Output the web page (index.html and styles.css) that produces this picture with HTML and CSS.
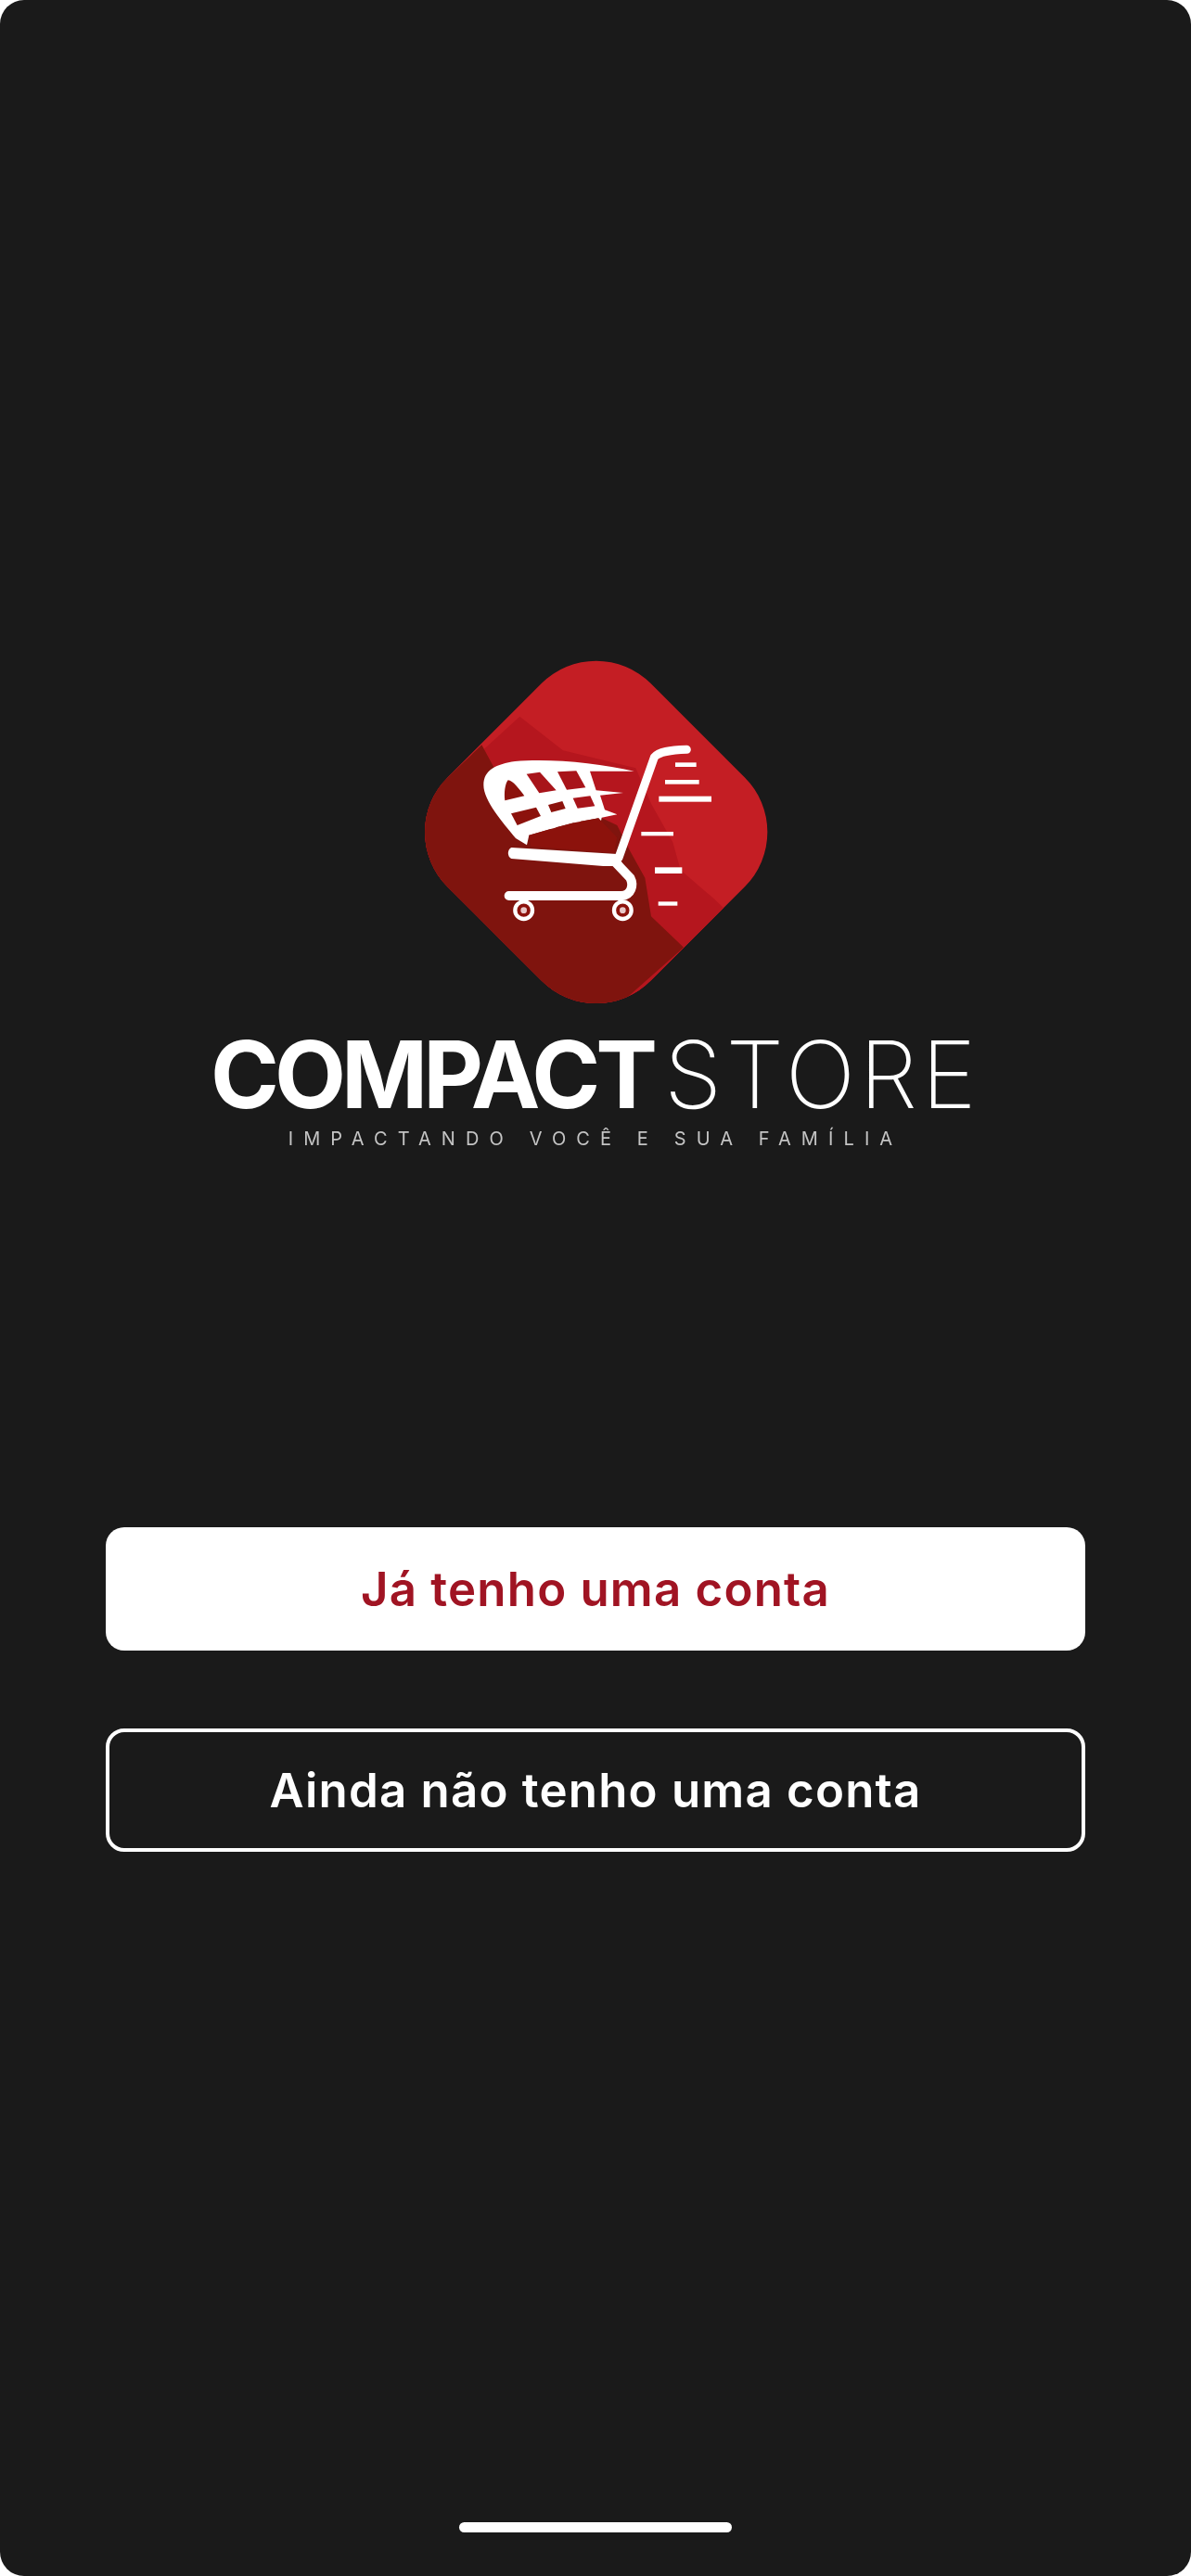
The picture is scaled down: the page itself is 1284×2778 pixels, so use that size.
FILE: index.html
```html
<!DOCTYPE html>
<html lang="pt-BR">

<head>
	<meta charset="UTF-8" />
	<title>Compact Store</title>
	<link rel="stylesheet" href="styles.css">
</head>

<body>
	<div class="screen">
		<div class="brand">
			<svg class="logo" viewBox="0 0 1260 1230" xmlns="http://www.w3.org/2000/svg">
				<defs>
					<clipPath id="diamond">
						<rect x="167" y="157" width="930" height="930" rx="250" transform="rotate(45 632 622)" />
					</clipPath>
				</defs>
				<g clip-path="url(#diamond)">
					<rect x="0" y="0" width="1260" height="1230" fill="#c41e24" />
					<!-- long shadow, lighter band then darker core -->
					<path d="M0,600 L385,248 L525,358 L760,415 L810,530 L880,655 L905,745 L1010,835 L1100,920 L1000,1100 L600,1230 L0,1230 Z" fill="#b5161e" />
					<path d="M0,590 L262,340 L300,410 L700,600 L740,680 L790,770 L810,895 L915,995 L650,1230 L0,1230 Z" fill="#7f140e" />
				</g>
				<!-- cart -->
				<path d="M268,470 C268,420 310,402 370,393 C480,383 640,398 755,425 L612,425 L632,487 L720,495 L645,503 L660,550 L700,565 L650,575 L645,600 L640,577 L582,587 L572,630 L560,592 L502,607 L517,662 L485,612 L415,632 L408,664 L372,642 C330,590 268,520 268,470 Z" fill="#fff" />
				<path d="M347,454 C362,454 385,485 400,505 L337,520 C334,495 337,467 347,454 Z" fill="#8c120c" />
				<path d="M407,434 L450,428 L503,487 L448,496 Z" fill="#a8141a" />
				<path d="M507,427 L568,424 L598,478 L537,485 Z" fill="#a8141a" />
				<path d="M477,534 L523,522 L533,546 L487,558 Z" fill="#8c120c" />
				<path d="M557,512 L613,505 L628,538 L572,545 Z" fill="#a8141a" />
				<path d="M357,562 L438,542 L453,570 L377,600 Z" fill="#8c120c" />
				<path d="M415,632 L485,612 L560,592 L640,577 L700,640 L690,690 L420,668 Z" fill="#8c120c" />
				<path d="M925,355 C870,357 835,362 820,380 L705,705" fill="none" stroke="#fff" stroke-width="27" stroke-linecap="round" />
				<path d="M358,672 L700,693 L722,732 L655,732 L358,708 C344,702 344,678 358,672 Z" fill="#fff" />
				<path d="M690,715 L742,770 C755,795 745,825 715,828 L350,828" fill="none" stroke="#fff" stroke-width="30" stroke-linecap="round" />
				<circle cx="398" cy="875" r="28" fill="#8c120c" stroke="#fff" stroke-width="13" />
				<circle cx="398" cy="875" r="10" fill="#e8c8c8" />
				<circle cx="718" cy="875" r="28" fill="#8c120c" stroke="#fff" stroke-width="13" />
				<circle cx="718" cy="875" r="10" fill="#e8c8c8" />
				<rect x="888" y="397" width="68" height="14" fill="#fff" />
				<rect x="855" y="453" width="110" height="14" fill="#fff" />
				<rect x="835" y="506" width="170" height="18" fill="#fff" />
				<rect x="778" y="621" width="104" height="13" fill="#fff" />
				<rect x="822" y="736" width="88" height="20" fill="#fff" />
				<rect x="833" y="847" width="62" height="13" fill="#fff" />
			</svg>
			<div class="wordmark">
				<span class="wordmark_bold">COMPACT</span>
				<span class="wordmark_thin">STORE</span>
			</div>
			<div class="tagline">IMPACTANDO VOCÊ E SUA FAMÍLIA</div>
		</div>

		<div class="actions">
			<button class="btn btn_solid">Já tenho uma conta</button>
			<button class="btn btn_outline">Ainda não tenho uma conta</button>
		</div>

		<div class="home_bar"></div>
	</div>
</body>

</html>
```

FILE: styles.css
```css
* {
	box-sizing: border-box;
}

html,
body {
	margin: 0;
	background-color: #fff;
}

.screen {
	display: flex;
	flex-direction: column;
	align-items: center;
	width: 1284px;
	height: 2778px;
	padding-top: 690px;
	background-color: #1a1a1a;
	border-radius: 26px;
	font-family: "Inter", sans-serif;
}

.brand {
	display: flex;
	flex-direction: column;
	align-items: center;
}

.logo {
	display: block;
	width: 420px;
	height: 410px;
	filter: blur(0.7px);
}

.wordmark {
	display: flex;
	align-items: center;
	gap: 12px;
	margin-top: 14px;
	height: 90px;
	font-size: 100px;
	line-height: 90px;
	color: #fff;
	filter: blur(0.5px);
}

.wordmark_bold {
	font-weight: 700;
	letter-spacing: -5px;
}

.wordmark_thin {
	font-weight: 200;
	letter-spacing: 4.5px;
}

.tagline {
	margin-top: 12px;
	font-size: 20px;
	line-height: 24px;
	letter-spacing: 11.1px;
	font-weight: 400;
	color: #c4c4c4;
	filter: blur(0.4px);
}

.actions {
	display: flex;
	flex-direction: column;
	gap: 84px;
	width: 1056px;
	margin-top: 407px;
}

.btn {
	height: 133px;
	border-radius: 20px;
	font-family: "Inter", sans-serif;
	font-size: 51px;
	font-weight: 600;
	letter-spacing: 1.2px;
}

.btn_solid {
	background-color: #fff;
	border: none;
	color: #a01423;
}

.btn_outline {
	background-color: #1a1a1a;
	border: 4px solid #fff;
	color: #fff;
}

.home_bar {
	width: 294px;
	height: 11px;
	margin-top: auto;
	margin-bottom: 47px;
	border-radius: 6px;
	background-color: #fff;
}
```
